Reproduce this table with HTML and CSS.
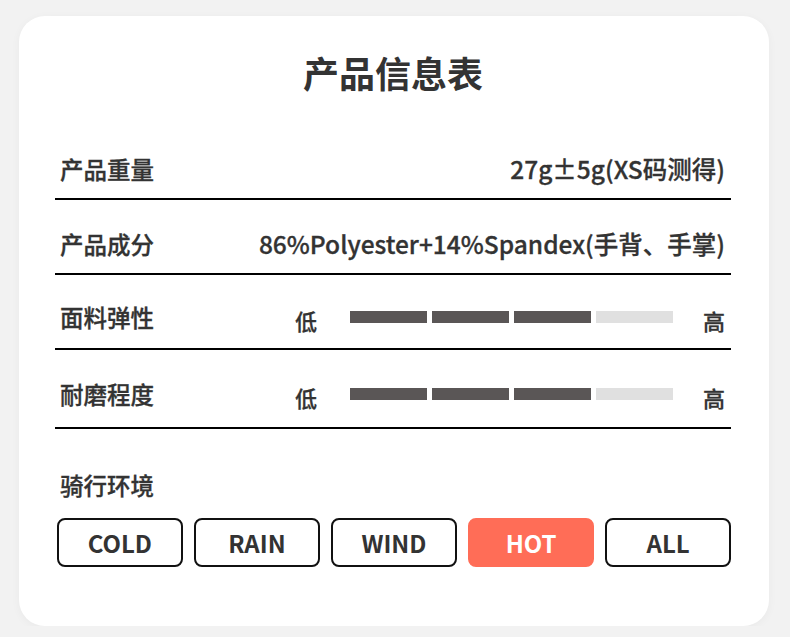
FILE: index.html
```html
<!DOCTYPE html>
<html lang="zh-CN">
<head>
<meta charset="utf-8">
<title>产品信息表</title>
<link rel="stylesheet" href="styles.css">
</head>
<body>
<div class="card">
  <h1 class="title">产品信息表</h1>
  <div class="row">
    <span class="label">产品重量</span>
    <span class="value">27g±5g(XS码测得)</span>
  </div>
  <div class="row">
    <span class="label">产品成分</span>
    <span class="value">86%Polyester+14%Spandex(手背、手掌)</span>
  </div>
  <div class="row row-scale">
    <span class="label">面料弹性</span>
    <span class="end">低</span>
    <div class="bars">
      <span class="seg on"></span><span class="seg on"></span><span class="seg on"></span><span class="seg"></span>
    </div>
    <span class="end end-high">高</span>
  </div>
  <div class="row row-last">
    <span class="label">耐磨程度</span>
    <span class="end">低</span>
    <div class="bars">
      <span class="seg on"></span><span class="seg on"></span><span class="seg on"></span><span class="seg"></span>
    </div>
    <span class="end end-high">高</span>
  </div>
  <div class="env">
    <div class="label env-label">骑行环境</div>
    <div class="tags">
      <span class="tag">COLD</span>
      <span class="tag">RAIN</span>
      <span class="tag">WIND</span>
      <span class="tag tag-active">HOT</span>
      <span class="tag">ALL</span>
    </div>
  </div>
</div>
</body>
</html>
```

FILE: styles.css
```css
* { box-sizing: border-box; }

html, body {
  margin: 0;
  padding: 0;
  background: #f2f2f2;
}

body {
  font-family: "Noto Sans CJK SC", "Noto Sans", sans-serif;
  color: #333;
  padding: 16px 0 0 19px;
}

.card {
  width: 750px;
  height: 610px;
  background: #fff;
  border-radius: 26px;
  box-shadow: 0 2px 10px rgba(0, 0, 0, 0.04);
  padding: 0 38px 0 36px;
}

.title {
  margin: 0;
  padding-top: 31px;
  height: 109px;
  line-height: 50px;
  font-size: 36px;
  font-weight: 700;
  text-align: center;
  color: #333;
}

.row {
  display: flex;
  align-items: center;
  padding: 29px 6px 14px 5px;
  border-bottom: 2px solid #000;
  line-height: 30px;
}

.row-scale {
  padding-top: 27px;
  padding-bottom: 16px;
}

.row-last {
  padding-bottom: 18px;
}

.label,
.value,
.end {
  font-family: "Noto Sans CJK SC Medium", "Noto Sans CJK SC", "Noto Sans", sans-serif;
  font-weight: 500;
  -webkit-text-stroke: 0.3px #333;
  white-space: nowrap;
}

.label {
  flex: 1;
  font-size: 23.5px;
}

.value {
  font-size: 24.5px;
}

.end {
  font-size: 22px;
  line-height: 30px;
  margin-top: 3px;
  margin-bottom: -3px;
}

.bars {
  display: grid;
  grid-template-columns: repeat(4, 1fr);
  gap: 4.5px;
  width: 323px;
  margin: 0 30px 0 33px;
}

.seg {
  height: 12px;
  background: #e0e0e0;
}

.seg.on {
  background: #5a5656;
}

.env {
  padding: 41px 0 0 0;
}

.env-label {
  padding-left: 5px;
  line-height: 30px;
}

.tags {
  display: grid;
  grid-template-columns: repeat(5, 1fr);
  gap: 11.5px;
  margin: 18px 0 0 2px;
}

.tag {
  height: 49px;
  border: 2px solid #111;
  border-radius: 8px;
  display: flex;
  align-items: center;
  justify-content: center;
  font-size: 24px;
  font-weight: 700;
  color: #333;
}

.tag-active {
  background: #ff6d57;
  border-color: #ff6d57;
  color: #fff;
}
```
